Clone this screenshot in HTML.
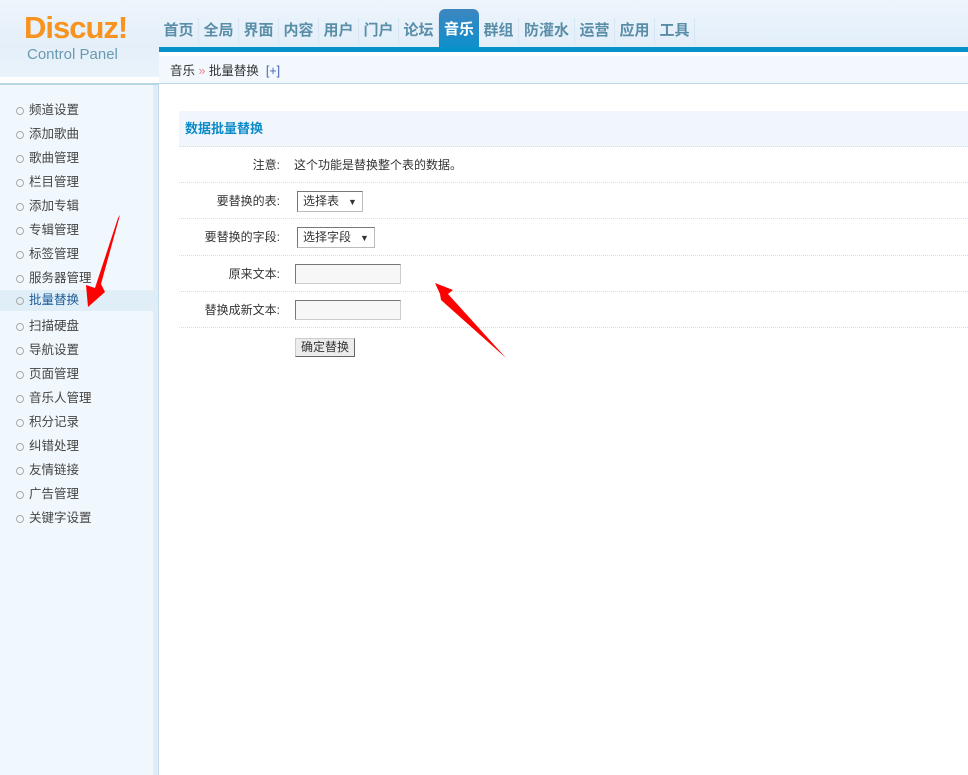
<!DOCTYPE html>
<html><head><meta charset="utf-8"><style>
*{margin:0;padding:0;box-sizing:border-box}
body{width:968px;height:775px;overflow:hidden;background:#fff;font-family:"Liberation Sans","Noto Sans CJK SC",sans-serif;font-size:12px;color:#333;position:relative}
#hd{position:absolute;left:0;top:0;width:968px;height:47px;background:linear-gradient(#eef5fc,#e2eef9)}
#lefttop{position:absolute;left:0;top:0;width:159px;height:80px;background:linear-gradient(#eef5fc,#e4effa 60%,#eaf3fb);border-bottom:3px solid #fff}
#logo{position:absolute;left:24px;top:12px;font:bold 31px "Liberation Sans",sans-serif;color:#f7931e;letter-spacing:-1px;line-height:32px}
#cp{position:absolute;left:27px;top:46px;font-size:15px;color:#6a9ab0}
#nav{position:absolute;left:159px;top:18px;display:flex}
#nav span{display:block;width:40px;text-align:center;height:26px;line-height:26px;font-size:15px;font-weight:bold;color:#5a8ea8;border-right:1px solid #d6e6f2}
#nav span.w{width:56px}
#nav span.on{background:linear-gradient(#3d86c0,#0f8fcb);color:#fff;border-radius:6px 6px 0 0;height:38px;margin-top:-9px;line-height:42px;border:none}
#bar{position:absolute;left:159px;top:47px;width:809px;height:5px;background:#0592c8}
#crumb{position:absolute;left:159px;top:52px;width:809px;height:32px;background:#f2f8fd;border-top:4px solid #fff;border-bottom:1px solid #b8d6e6;padding:4px 0 0 11px;font-size:12.5px;color:#333}
#crumb b{color:#4466bb;font-weight:normal}
#topline{position:absolute;left:0;top:83px;width:159px;height:2px;background:#b8d6e6}
#side{position:absolute;left:0;top:85px;width:153px;height:690px;background:#f1f8fd}
#sideb{position:absolute;left:153px;top:85px;width:6px;height:690px;background:#dfedf7;border-right:1px solid #c5dcea}
#side div{position:absolute;left:0;width:153px;height:21px;line-height:21px;padding-left:29px;font-size:12.5px;color:#444}
#side div:before{content:"";position:absolute;left:16px;top:7px;width:6px;height:6px;border:1px solid #aaa;border-radius:50%}
#side div.on{background:#e0eef8;color:#1a5a98}
#tb{position:absolute;left:179px;top:111px;width:789px}
.r{position:relative;height:36px;border-bottom:1px dotted #c6e3f2}
.h{background:#f0f6fc;height:36px;line-height:36px;padding-left:6px;font-weight:bold;font-size:13px;color:#0a8ac8}
.l{position:absolute;right:688px;top:0;line-height:36px;font-size:12px;white-space:nowrap}
.v{position:absolute;left:115px;top:0;line-height:36px}
.sel{position:absolute;left:118px;top:8px;height:21px;border:1px solid #777;border-right-color:#bbb;border-bottom-color:#bbb;background:#fff;padding:0 5px;line-height:19px;font-size:12px}
.sel i{font-style:normal;font-size:9px;margin-left:9px}
.inp{position:absolute;left:116px;top:8px;width:106px;height:20px;border:1px solid #777;border-right-color:#ccc;border-bottom-color:#ccc;background:#f7f7f7}
#btn{position:absolute;left:295px;top:338px;height:19px;padding:0 5px;border:1px solid #666;border-left-color:#ccc;border-top-color:#ccc;background:#ececec;font-size:12px;line-height:17px}
svg{position:absolute;left:0;top:0}
</style></head><body>
<div id="hd"></div>
<div id="lefttop"></div>
<div id="logo">Discuz!</div>
<div id="cp">Control Panel</div>
<div id="nav"><span>首页</span><span>全局</span><span>界面</span><span>内容</span><span>用户</span><span>门户</span><span>论坛</span><span class="on">音乐</span><span>群组</span><span class="w">防灌水</span><span>运营</span><span>应用</span><span>工具</span></div>
<div id="bar"></div>
<div id="crumb">音乐 <span style="color:#e88">»</span> 批量替换 &nbsp;<b>[+]</b></div>
<div id="topline"></div>
<div id="side">
<div style="top:15px">频道设置</div><div style="top:39px">添加歌曲</div><div style="top:63px">歌曲管理</div><div style="top:87px">栏目管理</div><div style="top:111px">添加专辑</div><div style="top:135px">专辑管理</div><div style="top:159px">标签管理</div><div style="top:183px">服务器管理</div><div class="on" style="top:205px;height:21px">批量替换</div><div style="top:231px">扫描硬盘</div><div style="top:255px">导航设置</div><div style="top:279px">页面管理</div><div style="top:303px">音乐人管理</div><div style="top:327px">积分记录</div><div style="top:351px">纠错处理</div><div style="top:375px">友情链接</div><div style="top:399px">广告管理</div><div style="top:423px">关键字设置</div>
</div>
<div id="sideb"></div>
<div id="tb">
<div class="h r">数据批量替换</div>
<div class="r"><span class="l">注意:</span><span class="v">这个功能是替换整个表的数据。</span></div>
<div class="r"><span class="l">要替换的表:</span><span class="sel">选择表<i>▼</i></span></div>
<div class="r" style="height:37px"><span class="l">要替换的字段:</span><span class="sel">选择字段<i>▼</i></span></div>
<div class="r"><span class="l">原来文本:</span><span class="inp"></span></div>
<div class="r"><span class="l">替换成新文本:</span><span class="inp"></span></div>
</div>
<div id="btn">确定替换</div>
<svg width="968" height="775">
<polygon fill="#f00" points="120,215 101,284 105,292 88,307 86,285 95,288 118,218"/>
<polygon fill="#f00" points="435,283 453,290 448,294 506,358 441,300 440,294"/>
</svg>
</body></html>
